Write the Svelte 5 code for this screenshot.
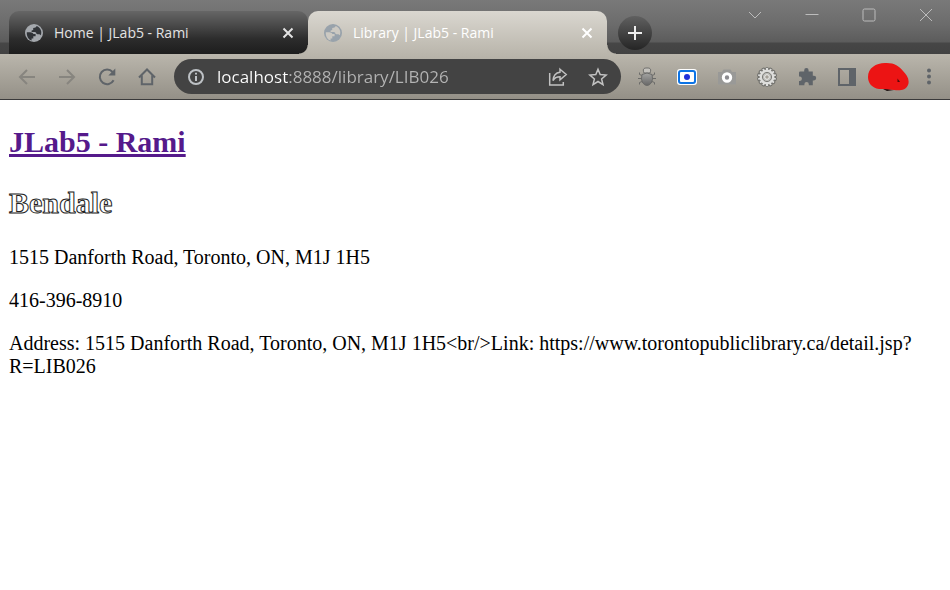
<script>
  const tabs = [
    { title: 'Home | JLab5 - Rami', active: false },
    { title: 'Library | JLab5 - Rami', active: true }
  ];
  let address = $state('localhost:8888/library/LIB026');
  const teeth = Array.from({ length: 14 }, (_, i) => (i * 360) / 14);
</script>

<div class="browser">
  <header>
    <div class="strip">
      <div class="tabs">
        {#each tabs as tab}
          <div class="tab" class:active={tab.active}>
            <svg class="globe" viewBox="0 0 20 20" width="20" height="20" aria-hidden="true">
              <circle cx="10" cy="10" r="9" />
              <path d="M2.800 9.200h3.400c1.600 0 2.800.7 3.200 1.900h2.200v2.200H9.300v2.200H7.600v2C4.300 16.500 2.500 13.200 2.800 9.200z" />
              <path d="M12.500 2.900c-.2 1-.9 1.700-2 1.800L9.200 5v1.900l-1.600.5V9h3.200c1 0 1.500.8 1.600 1.700l1 .5h2.100l1.300 1c1.500-4-.4-8-4.300-9.300z" />
            </svg>
            <span class="title">{tab.title}</span>
            <button class="close" aria-label="Close tab">
              <svg viewBox="0 0 12 12" width="12" height="12"><path d="M1.500 1.500l9 9m0-9l-9 9" /></svg>
            </button>
          </div>
        {/each}
      </div>
      <button class="new-tab" aria-label="New tab">
        <svg viewBox="0 0 16 16" width="16" height="16"><path d="M8 1v14M1 8h14" /></svg>
      </button>
      <div class="window-buttons">
        <button aria-label="Search tabs"><svg viewBox="0 0 14 14" width="14" height="14"><path d="M1 4l6 6 6-6" /></svg></button>
        <button aria-label="Minimize"><svg viewBox="0 0 14 14" width="14" height="14"><path d="M.5 6.500h13" /></svg></button>
        <button aria-label="Maximize"><svg viewBox="0 0 14 14" width="14" height="14"><rect x="1" y="1" width="12" height="12" rx="1.500" /></svg></button>
        <button aria-label="Close"><svg viewBox="0 0 14 14" width="14" height="14"><path d="M1 1l12 12M13 1L1 13" /></svg></button>
      </div>
    </div>

    <div class="toolbar">
      <button class="tool faded" aria-label="Back">
        <svg viewBox="0 0 20 20" width="20" height="20"><path d="M18 10H3m7-7l-7 7 7 7" /></svg>
      </button>
      <button class="tool faded" aria-label="Forward">
        <svg viewBox="0 0 20 20" width="20" height="20"><path d="M2 10h15m-7-7l7 7-7 7" /></svg>
      </button>
      <button class="tool" aria-label="Reload">
        <svg viewBox="0 0 20 20" width="20" height="20"><path d="M16.600 13.200a7.300 7.300 0 1 1-1-8.200" /><path class="fill" d="M18.300 1.500v7h-7z" /></svg>
      </button>
      <button class="tool" aria-label="Home">
        <svg viewBox="0 0 20 20" width="20" height="20"><path d="M2 10.500l8-8 8 8M4.800 8.500v8.700h10.400V8.500" /></svg>
      </button>

      <div class="omnibox">
        <button class="info" aria-label="Site information">
          <svg viewBox="0 0 18 18" width="18" height="18"><circle cx="9" cy="9" r="7" /><path d="M9 8v5M9 4.700v1.800" /></svg>
        </button>
        <input aria-label="Address" type="text" spellcheck="false" bind:value={address} />
        <button class="tool light" aria-label="Share">
          <svg viewBox="0 0 20 20" width="20" height="20"><path d="M1.700 6v12h13.600v-3" /><path d="M12 2.200l6.200 5.300-6.200 5.300V9.800c-3.500 0-5.500 1-7 3.800 .3-4.500 2.500-7.900 7-8.400z" /></svg>
        </button>
        <button class="tool light" aria-label="Bookmark this page">
          <svg viewBox="0 0 20 20" width="20" height="20"><path d="M10 2.200l2.200 5.400 5.900.5-4.500 3.800 1.400 5.700-5-3.100-5 3.100 1.400-5.700-4.500-3.800 5.900-.5z" /></svg>
        </button>
      </div>

      <button class="tool" aria-label="Bug extension">
        <svg class="bug" viewBox="0 0 20 20" width="20" height="20">
          <defs><linearGradient id="shell" x2="0" y2="1"><stop stop-color="#a5a5a3" /><stop offset="1" stop-color="#666" /></linearGradient></defs>
          <path d="M5 8.500L2.500 7.500V5.500M15 8.500l2.500-1v-2M4.500 11.500H1m14.500 0H19M5 14.500l-2.500 1v2M15 14.500l2.500 1v2" />
          <path class="head" d="M7 6C5 1 8 1 10 1s5 0 3 5z" />
          <path class="shell" d="M5 7.500q5-3 10 0 1.500 5-.8 8.500-4.200 5-8.400 0-2.300-3.500-.8-8.500z" />
        </svg>
      </button>
      <button class="tool" aria-label="Screen capture extension">
        <svg class="capture" viewBox="0 0 20 20" width="20" height="20">
          <rect class="outer" x="0" y="2" width="20" height="16" rx="3" />
          <rect class="frame" x="2" y="4" width="16" height="12" rx="2" />
          <circle cx="10" cy="10" r="3" />
        </svg>
      </button>
      <button class="tool" aria-label="Camera extension">
        <svg class="camera" viewBox="0 0 20 20" width="20" height="20">
          <path d="M1 5h4l1.500-2.500h7L15 5h4v12.500H1z" />
          <circle cx="10" cy="10.500" r="3.700" />
        </svg>
      </button>
      <button class="tool" aria-label="Gear extension">
        <svg class="gear" viewBox="0 0 20 20" width="20" height="20">
          {#each teeth as angle}
            <rect x="8.500" y=".5" width="3" height="5" rx="1" transform="rotate({angle} 10 10)" />
          {/each}
          <circle class="rim" cx="10" cy="10" r="7.400" />
          <circle class="disc" cx="10" cy="10" r="4.600" />
          <circle class="hub" cx="10" cy="10" r="2.300" />
        </svg>
      </button>
      <button class="tool" aria-label="Extensions">
        <svg viewBox="0 0 20 20" width="20" height="20"><path class="fill" d="M3.200 4.500h4V3.200a2.200 2.200 0 0 1 4.400 0v1.300h4.200v4.300h1.100a2.300 2.300 0 0 1 0 4.600h-1.100v4.900h-4v-1.200a2.200 2.200 0 0 0-4.400 0v1.200H2v-4.200h1.100a2.300 2.300 0 0 0 0-4.500H2V5.700q0-1.200 1.200-1.200z" /></svg>
      </button>
      <button class="tool" aria-label="Side panel">
        <svg viewBox="0 0 20 20" width="20" height="20"><path class="fill" fill-rule="evenodd" d="M1 1h18v18H1zM3 3v14h9V3z" /></svg>
      </button>
      <button class="profile" aria-label="Profile">
        <svg viewBox="0 0 42 30" width="42" height="30">
          <path d="M14 26l6 3 7-1z" fill="#1c1111" />
          <path d="M1 15C1 6 9 1 18 1c9-.5 14 3 18 8 4 4 7 9 5 14-2 5-8 6-14 5-6-1-9-1-15-1C5 26 1 21 1 15z" fill="#ec1414" />
          <path d="M30.500 16.500v3.500h2.500z" fill="#4f0909" />
        </svg>
      </button>
      <button class="tool" aria-label="Menu">
        <svg viewBox="0 0 20 20" width="20" height="20"><g class="fill"><circle cx="10" cy="3.500" r="2" /><circle cx="10" cy="9.500" r="2" /><circle cx="10" cy="15.500" r="2" /></g></svg>
      </button>
    </div>
  </header>

  <main>
    <h1><a href="/">JLab5 - Rami</a></h1>
    <h2>Bendale</h2>
    <p>1515 Danforth Road, Toronto, ON, M1J 1H5</p>
    <p>416-396-8910</p>
    <p>{'Address: 1515 Danforth Road, Toronto, ON, M1J 1H5<br/>Link: https://www.torontopubliclibrary.ca/detail.jsp?R=LIB026'}</p>
  </main>
</div>

<style>
  :global(body) {
    background: #fff;
  }

  .browser {
    font-family: 'Open Sans', 'Noto Sans', sans-serif;
  }

  button {
    display: flex;
    align-items: center;
    justify-content: center;
    flex: none;
    padding: 0;
    border: 0;
    background: none;
  }

  svg {
    display: block;
    flex: none;
    fill: none;
    stroke: currentColor;
  }

  .fill {
    fill: currentColor;
    stroke: none;
  }

  .strip {
    display: flex;
    height: 54px;
    padding-left: 9px;
    background: linear-gradient(#797979 0, #6c6c6c 24px, #5c5c5c 42px, #464646 43px, #424242 100%);
  }

  .tabs {
    display: flex;
    flex: 0 1 598px;
    min-width: 0;
    padding-top: 11px;
  }

  .tab {
    position: relative;
    display: flex;
    align-items: center;
    flex: 1 1 0;
    min-width: 0;
    box-sizing: border-box;
    padding: 0 12px 0 15px;
    border-radius: 10px 10px 0 0;
    background: linear-gradient(#666 0, #4a4a4a 14px, #2c2c2c 28px, #1d1d1d 100%);
    color: #e3e3e3;
  }

  .tab.active {
    background: linear-gradient(#dad7d0, #bab6ac);
    color: #fff;
  }

  .tab.active::before,
  .tab.active::after {
    content: '';
    position: absolute;
    bottom: 0;
    width: 9px;
    height: 9px;
  }

  .tab.active::before {
    right: 100%;
    background: radial-gradient(circle at 0 0, transparent 8px, #bab6ac 9px);
  }

  .tab.active::after {
    left: 100%;
    background: radial-gradient(circle at 100% 0, transparent 8px, #bab6ac 9px);
  }

  .globe circle {
    fill: #a4a8ad;
    stroke: none;
  }

  .globe path {
    fill: #303337;
    stroke: none;
  }

  .active .globe circle {
    fill: #98a2ab;
  }

  .active .globe path {
    fill: #ccc9c2;
  }

  .title {
    flex: 1;
    min-width: 0;
    margin-left: 10px;
    overflow: hidden;
    font-size: 14px;
    line-height: 20px;
    white-space: nowrap;
  }

  .close {
    width: 16px;
    height: 16px;
    color: inherit;
  }

  .close svg {
    stroke-width: 2;
  }

  .new-tab {
    width: 34px;
    height: 34px;
    margin: 16px 0 0 11px;
    border-radius: 50%;
    background: linear-gradient(#606060, #252525);
    color: #eee;
  }

  .new-tab svg {
    stroke-width: 2;
  }

  .window-buttons {
    display: flex;
    height: 29px;
    margin-left: auto;
    color: #bcbcbc;
  }

  .window-buttons button {
    width: 57px;
    color: inherit;
  }

  .window-buttons button:last-child {
    width: 48px;
    margin-left: 5px;
  }

  .toolbar {
    display: flex;
    align-items: center;
    height: 45px;
    padding: 0 1px 0 7px;
    border-bottom: 1px solid #3a3a3a;
    background: linear-gradient(#bab6ac, #949087);
  }

  .tool {
    width: 40px;
    height: 36px;
    color: #5f6469;
  }

  .tool svg {
    stroke-width: 2;
  }

  .tool.faded {
    color: #87857f;
  }

  .tool.light {
    color: #c2c2c2;
  }

  .tool.light svg {
    stroke-width: 1.5;
  }

  .omnibox {
    display: flex;
    align-items: center;
    flex: 1;
    min-width: 0;
    height: 35px;
    box-sizing: border-box;
    margin: 0 6px 0 7px;
    padding: 0 3px 0 13px;
    border-radius: 18px;
    background: #434343;
  }

  .info {
    width: 18px;
    color: #bdc1c5;
  }

  .info svg {
    stroke-width: 2;
  }

  input {
    flex: 1;
    width: 0;
    min-width: 0;
    height: 26px;
    margin-left: 12px;
    padding: 0;
    border: 0;
    outline: 0;
    background: linear-gradient(90deg, #fff 71px, #b4b4b4 71px);
    background-clip: text;
    -webkit-background-clip: text;
    -webkit-text-fill-color: transparent;
    color: #fff;
    font: 17px/26px 'Open Sans', 'Noto Sans', sans-serif;
  }

  .bug {
    color: #6b6b69;
  }

  .tool .bug {
    stroke-width: 1;
  }

  .bug .head {
    fill: #c4c2bd;
  }

  .bug .shell {
    fill: url(#shell);
  }

  .capture .outer {
    fill: #fff;
    stroke: none;
  }

  .capture .frame {
    stroke: #0b73e5;
  }

  .capture circle {
    fill: #2030d8;
    stroke: none;
  }

  .camera path {
    fill: #999997;
    stroke: none;
  }

  .camera circle {
    fill: #8c8c90;
    stroke: #fff;
    stroke-width: 3;
  }

  .tool .gear {
    stroke-width: 1;
  }

  .gear rect {
    fill: #dededc;
    stroke: #6d6d69;
  }

  .gear .rim {
    fill: #dededc;
    stroke: none;
  }

  .gear .disc {
    fill: #bcbcb8;
    stroke: #7c7c78;
  }

  .gear .hub {
    fill: #a5a199;
    stroke: #f0f0ee;
  }

  .profile {
    width: 42px;
    height: 30px;
  }

  .profile svg {
    stroke: none;
  }

  main {
    padding: 24px 9px 20px;
    color: #000;
    font-family: 'Liberation Serif', 'Times New Roman', serif;
    font-size: 20px;
    line-height: 23px;
  }

  h1,
  h2 {
    margin: 0 0 26px;
    font-size: 30px;
    line-height: 35px;
    font-weight: 700;
  }

  h1 a {
    color: #551a8b;
    text-decoration-thickness: 3px;
  }

  h2 {
    color: #fff;
    -webkit-text-stroke: 1px #222;
  }

  p {
    margin: 0 0 20px;
  }
</style>
